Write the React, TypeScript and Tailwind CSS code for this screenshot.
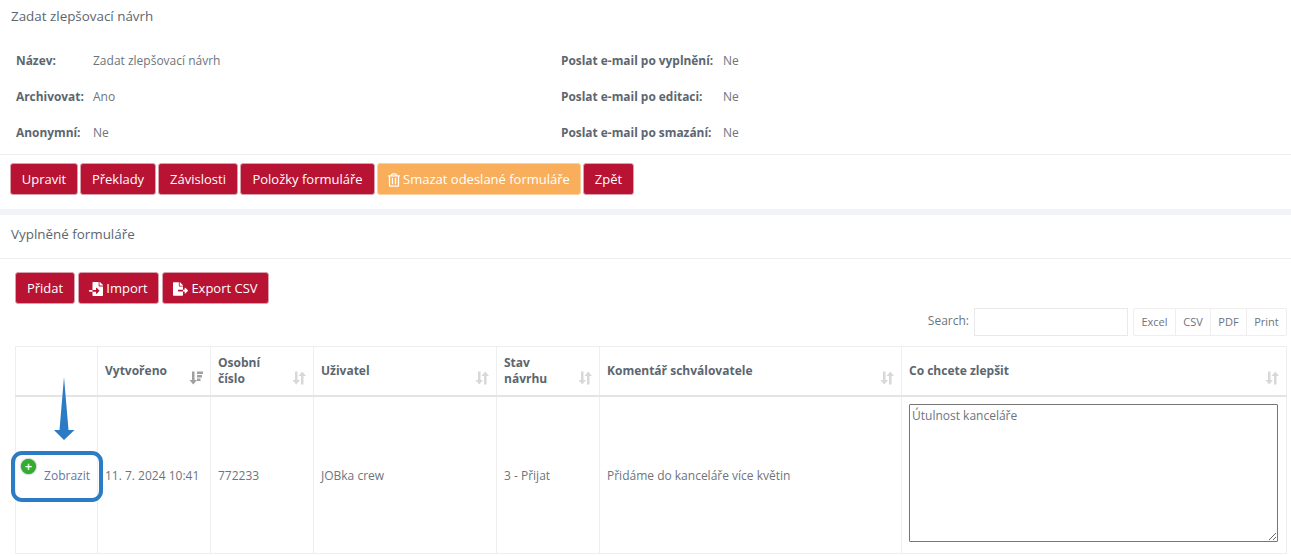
import { FaFileExport, FaFileImport, FaRegTrashAlt } from 'react-icons/fa';

function Btn({ children, className = '' }: { children: React.ReactNode; className?: string }) {
  return (
    <button className={`h-[32px] pt-[1px] rounded-[3px] border border-[#d9a0ae] bg-[#b81333] text-white text-[13px] flex items-center justify-center gap-[3px] ${className}`}>
      {children}
    </button>
  );
}

function SortIcon({ active = false }: { active?: boolean }) {
  return (
    <svg width="14" height="14" viewBox="0 0 14 14" className={active ? 'text-[#a0a0a0]' : 'text-[#d8d8d8]'} fill="currentColor">
      <path d="M3 0.500h2.500V9H8L4.250 13.500 0.500 9H3z" />
      {active ? (
        <path d="M8 0.500h6v2.500H8zM8 4h5v2.500H8zM8 7.500h3.500V10H8z" />
      ) : (
        <path d="M9 13.500V5H6.500L10.250 0.500 14 5h-2.500v8.500z" />
      )}
    </svg>
  );
}

function Info({ label, value, labelWidth }: { label: string; value: string; labelWidth: string }) {
  return (
    <div className="flex items-center h-[36px]">
      <span className={`font-bold text-[#5c6670] text-[11.900px] ${labelWidth}`}>{label}</span>
      <span className="text-[#6c757d] text-[12px]">{value}</span>
    </div>
  );
}

function Th({ children, width, active }: { children?: React.ReactNode; width: string; active?: boolean }) {
  return (
    <th className={`relative border border-[#eeeeee] border-b-2 border-b-[#e4e4e4] text-left align-middle px-[7px] pt-[1px] font-bold text-[12px] leading-[16px] text-[#5c6670] ${width}`}>
      {children}
      {children && (
        <span className="absolute right-[7px] bottom-[10px] flex">
          <SortIcon active={active} />
        </span>
      )}
    </th>
  );
}

function Td({ children }: { children?: React.ReactNode }) {
  return <td className="border border-[#eeeeee] px-[7px] pt-[2px] text-[12px] text-[#6c757d] align-middle">{children}</td>;
}

export default function App() {
  return (
    <div className="relative w-[1291px] h-[556px] overflow-hidden bg-white font-['Open_Sans',sans-serif]">
      <div className="h-[155px] border-b border-[#eeeeee]">
        <h2 className="pl-[11px] pt-[8px] text-[13.400px] leading-[17px] font-medium text-[#5c6670]">Zadat zlepšovací návrh</h2>
        <div className="grid grid-cols-[561px_1fr] pl-[16px] pt-[18px]">
          <div>
            <Info label="Název:" value="Zadat zlepšovací návrh" labelWidth="w-[77px]" />
            <Info label="Archivovat:" value="Ano" labelWidth="w-[77px]" />
            <Info label="Anonymní:" value="Ne" labelWidth="w-[77px]" />
          </div>
          <div className="-ml-[16px]">
            <Info label="Poslat e-mail po vyplnění:" value="Ne" labelWidth="w-[162px]" />
            <Info label="Poslat e-mail po editaci:" value="Ne" labelWidth="w-[162px]" />
            <Info label="Poslat e-mail po smazání:" value="Ne" labelWidth="w-[162px]" />
          </div>
        </div>
      </div>

      <div className="flex gap-[2px] pl-[10px] pt-[8px] h-[54px]">
        <Btn className="w-[68px]">Upravit</Btn>
        <Btn className="w-[76px]">Překlady</Btn>
        <Btn className="w-[80px]">Závislosti</Btn>
        <Btn className="w-[135px]">Položky formuláře</Btn>
        <Btn className="w-[204px] !bg-[#f9ae5b] !border-[#fbcf9f]">
          <FaRegTrashAlt className="w-[12px] h-[14px]" />
          Smazat odeslané formuláře
        </Btn>
        <Btn className="w-[51px]">Zpět</Btn>
      </div>

      <div className="h-[6px] bg-[#f1f3f8]" />

      <div className="h-[44px] border-b border-[#eeeeee] flex items-center pl-[11px] pb-[4px]">
        <h2 className="text-[13.400px] font-medium text-[#5c6670]">Vyplněné formuláře</h2>
      </div>

      <div className="flex gap-[3px] pl-[15px] pt-[13px] h-[49px]">
        <Btn className="w-[60px]">Přidat</Btn>
        <Btn className="w-[81px]">
          <FaFileImport className="w-[14px] h-[14px]" />
          Import
        </Btn>
        <Btn className="w-[107px]">
          <FaFileExport className="w-[15px] h-[14px]" />
          Export CSV
        </Btn>
      </div>

      <div className="flex justify-end items-center h-[28px] pr-[4px]">
        <span className="text-[12px] text-[#6c757d] mr-[5px] pb-[2px]">Search:</span>
        <div className="w-[154px] h-[28px] border border-[#e9e9e9] mr-[5px]" />
        <div className="flex h-[28px] border border-[#eeeeee] rounded-[2px] text-[11px] text-[#6c757d]">
          <span className="w-[42px] flex items-center justify-center border-r border-[#eeeeee]">Excel</span>
          <span className="w-[35px] flex items-center justify-center border-r border-[#eeeeee]">CSV</span>
          <span className="w-[36px] flex items-center justify-center border-r border-[#eeeeee]">PDF</span>
          <span className="w-[39px] flex items-center justify-center">Print</span>
        </div>
      </div>

      <div className="pl-[15px] pt-[10px]">
        <table className="table-fixed border-collapse w-[1271px]">
          <thead>
            <tr className="h-[49px]">
              <Th width="w-[82px]" />
              <Th width="w-[113px]" active>Vytvořeno</Th>
              <Th width="w-[103px]">Osobní<br />číslo</Th>
              <Th width="w-[183px]">Uživatel</Th>
              <Th width="w-[103px]">Stav<br />návrhu</Th>
              <Th width="w-[302px]">Komentář schválovatele</Th>
              <Th width="w-[385px]">Co chcete zlepšit</Th>
            </tr>
          </thead>
          <tbody>
            <tr className="h-[158px]">
              <td className="relative border border-[#eeeeee] pt-[2px] text-[12px] text-right pr-[7px] text-[#6577a6]">
                Zobrazit
                <span className="absolute left-[5px] top-[62px] w-[15px] h-[15px] rounded-full bg-[#2fae2f] text-white flex items-center justify-center text-[13px] leading-none font-semibold shadow-[0_0_2px_#666666]">+</span>
              </td>
              <Td><span className="whitespace-nowrap">11. 7. 2024 10:41</span></Td>
              <Td>772233</Td>
              <Td>JOBka crew</Td>
              <Td>3 - Přijat</Td>
              <Td>Přidáme do kanceláře více květin</Td>
              <td className="border border-[#eeeeee] pl-[7px] pr-[8px] pt-[7px] align-top">
                <textarea
                  readOnly
                  defaultValue="Útulnost kanceláře"
                  className="block w-full h-[138px] border border-[#767676] rounded-[1px] px-[2px] py-[3px] text-[12px] leading-[16px] text-[#6c757d]"
                />
              </td>
            </tr>
          </tbody>
        </table>
      </div>

      {/* blue annotation over the first cell */}
      <svg className="absolute left-[50px] top-[377px]" width="30" height="64" viewBox="0 0 30 64" fill="#2b7cc4">
        <path d="M14 0 L18.500 53 H24.500 L14 63 L4 53 H9.500 Z" />
      </svg>
      <div className="absolute left-[11px] top-[451px] w-[92px] h-[51px] rounded-[11px] border-4 border-[#2b7cc4]" />
    </div>
  );
}
